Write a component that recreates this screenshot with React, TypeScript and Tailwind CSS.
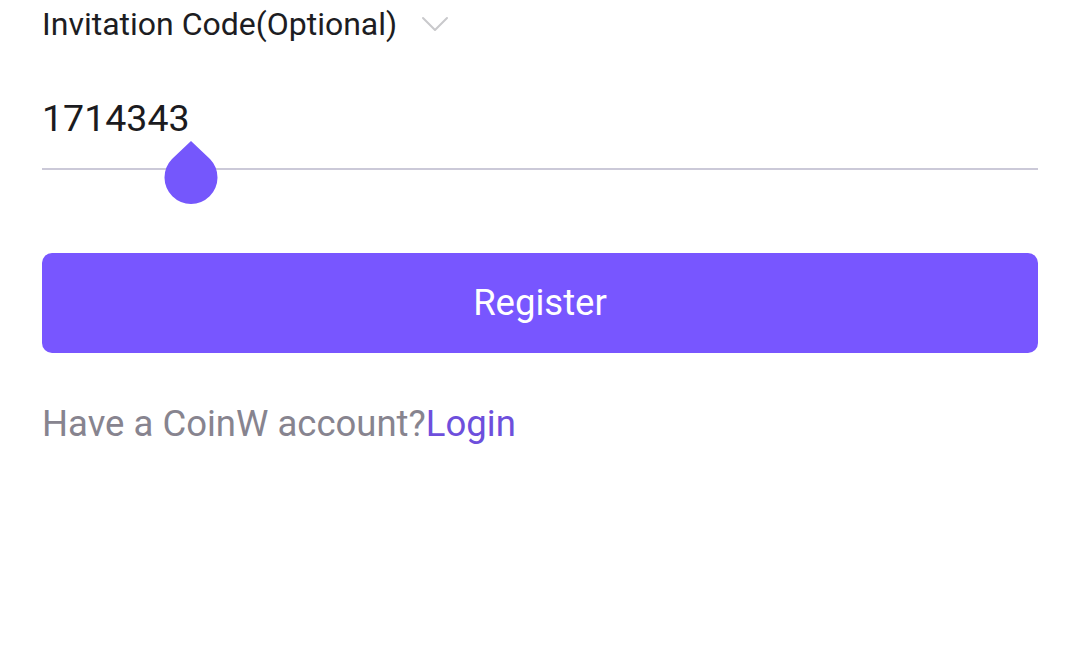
import React from "react";

const Chevron = () => (
  <svg width="28" height="16" viewBox="0 0 28 16" fill="none">
    <path d="M2 2l12 12L26 2" stroke="#c9c9cc" strokeWidth="2" strokeLinecap="round" strokeLinejoin="round" />
  </svg>
);

const Thumb = () => (
  <svg width="54" height="64" viewBox="0 0 54 64">
    <path d="M27 0 L46 18 A26.5 26.5 0 1 1 8 18 Z" fill="#7557fc" />
  </svg>
);

const App = () => {
  return (
    <div className="h-[647px] w-[1080px] bg-white px-[42px] font-['Roboto',sans-serif]">
      <div className="flex items-center gap-[24px] pt-[4px]">
        <p className="text-[32px] leading-[40px] text-[#1d1d22]">Invitation Code(Optional)</p>
        <Chevron />
      </div>
      <div className="relative mt-[52px] h-[74px] border-b-2 border-[#cbc9d8]">
        <p className="text-[37.5px] leading-[44px] text-[#1b1b20]">1714343</p>
        <div className="absolute left-[122px] top-[45px]">
          <Thumb />
        </div>
      </div>
      <button className="mt-[83px] flex h-[100px] w-full items-center justify-center rounded-[10px] bg-[#7856ff] text-[36.5px] text-white">
        Register
      </button>
      <p className="mt-[50px] text-[36.5px] leading-[42px] text-[#87848f]">
        Have a CoinW account?<span className="text-[#6e4fdc]">Login</span>
      </p>
    </div>
  );
};

export default App;
